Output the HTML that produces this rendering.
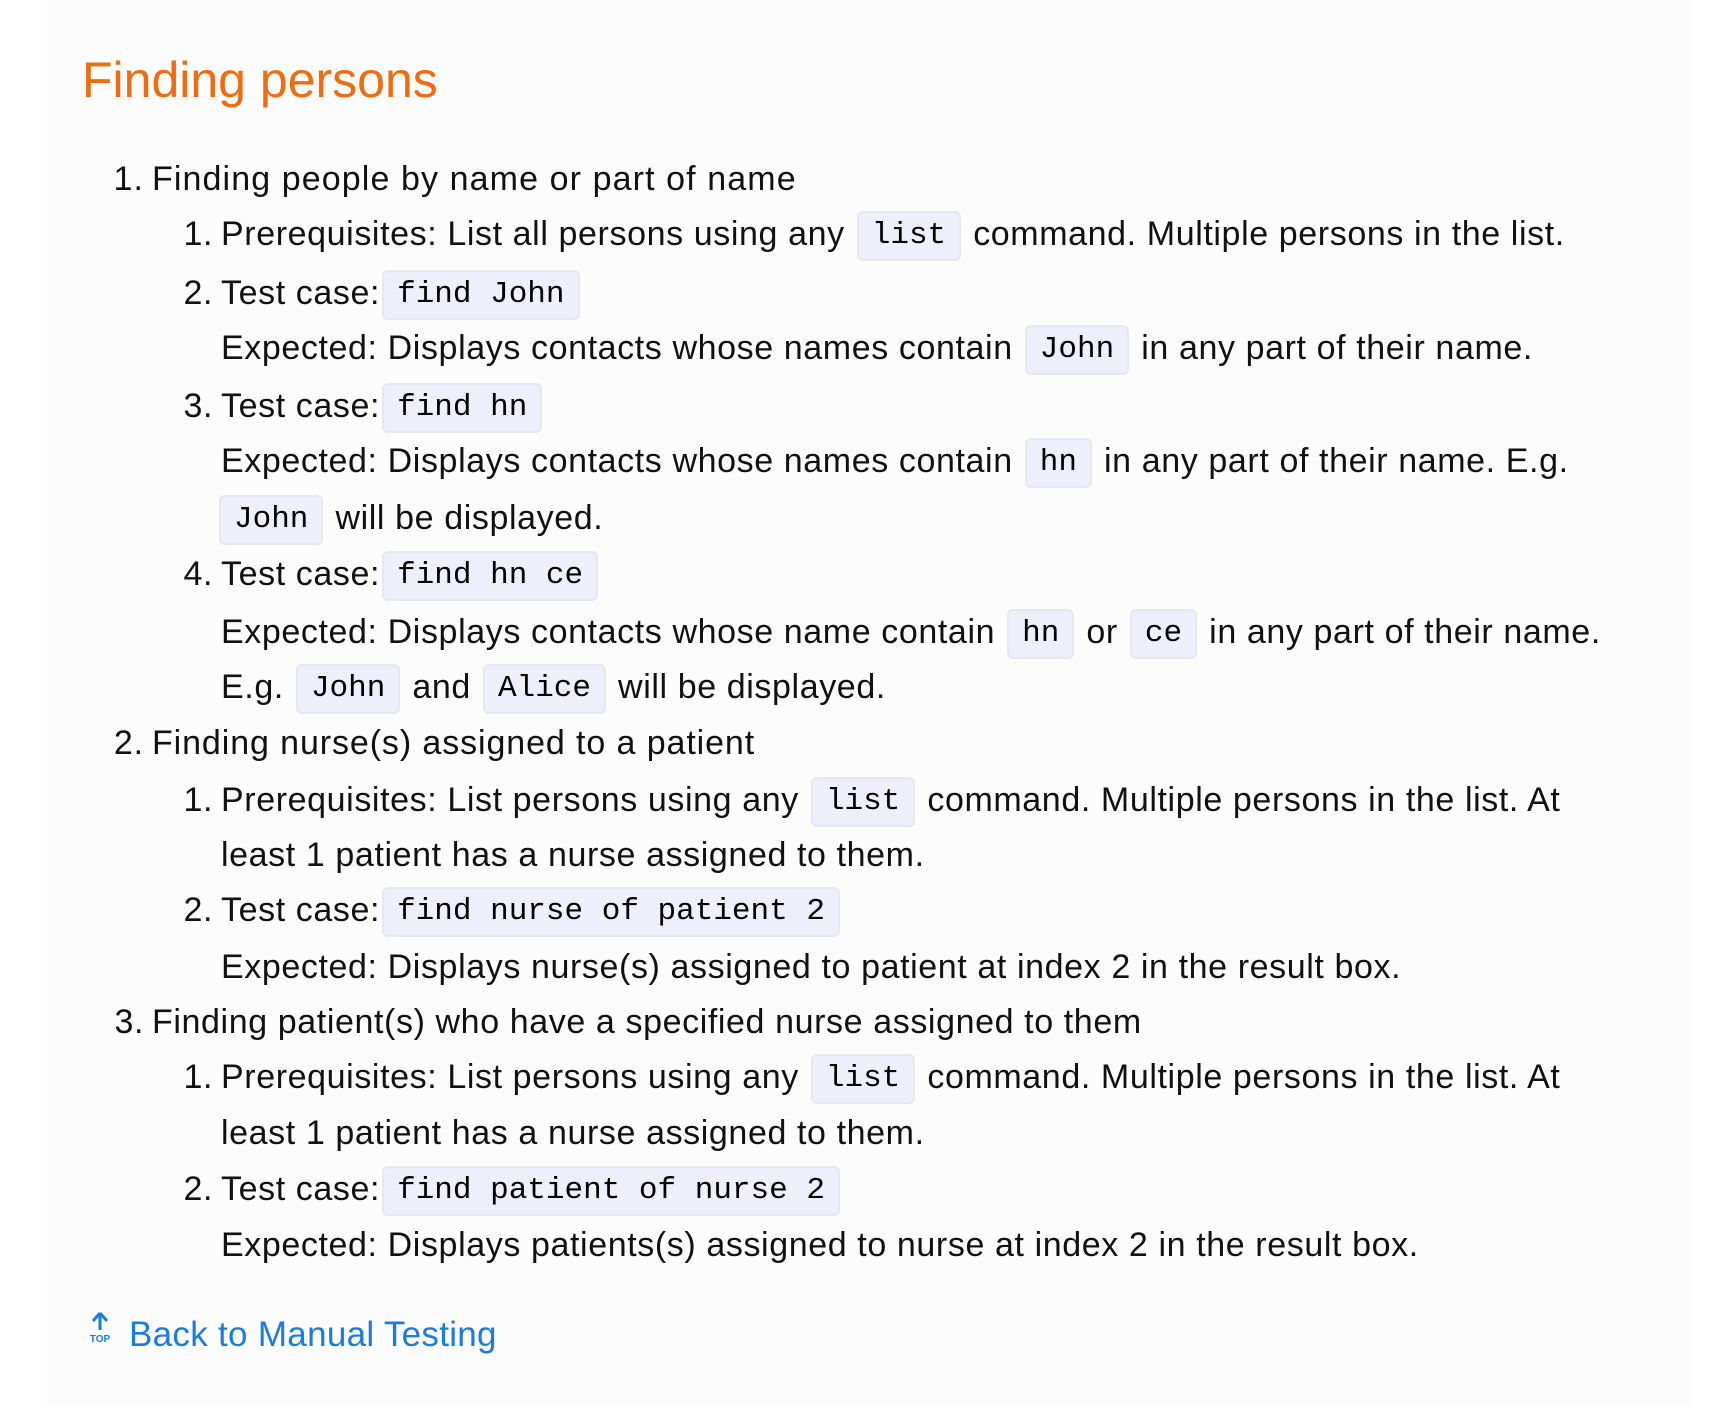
<!DOCTYPE html>
<html><head><meta charset="utf-8"><style>
body{margin:0;background:#fff;width:1726px;height:1406px;position:relative;overflow:hidden;font-family:"Liberation Sans",sans-serif;color:#111;}
.panel{position:absolute;left:47px;top:0;width:1645px;height:1406px;background:#fcfcfc;}
.l{position:absolute;height:56px;line-height:56px;font-size:34px;white-space:nowrap;letter-spacing:0.6px}
.n{position:absolute;right:100%;padding-right:8px}
code{font-family:"Liberation Mono",monospace;font-size:31px;display:inline-block;line-height:46px;padding:0 13px;background:#efeffb;border:2px solid #e7e7ef;border-radius:6px;vertical-align:middle;margin:0 2px;letter-spacing:0;color:#000}
h1{position:absolute;left:82px;top:48px;margin:0;font-weight:normal;font-size:50px;line-height:64px;color:#f26b0f;}
a{color:#1a7be0;text-decoration:none}
</style></head><body>
<div class="panel"></div>
<h1>Finding persons</h1>
<div class="l" style="left:152px;top:151px;letter-spacing:1.1px"><span class="n">1.</span>Finding people by name or part of name</div>
<div class="l" style="left:221px;top:206px"><span class="n">1.</span>Prerequisites: List all persons using any <code>list</code> command. Multiple persons in the list.</div>
<div class="l" style="left:221px;top:265px"><span class="n">2.</span>Test case:<code>find John</code></div>
<div class="l" style="left:221px;top:320px">Expected: Displays contacts whose names contain <code>John</code> in any part of their name.</div>
<div class="l" style="left:221px;top:378px"><span class="n">3.</span>Test case:<code>find hn</code></div>
<div class="l" style="left:221px;top:433px">Expected: Displays contacts whose names contain <code>hn</code> in any part of their name. E.g.</div>
<div class="l" style="left:217px;top:490px"><code>John</code> will be displayed.</div>
<div class="l" style="left:221px;top:546px"><span class="n">4.</span>Test case:<code>find hn ce</code></div>
<div class="l" style="left:221px;top:604px">Expected: Displays contacts whose name contain <code>hn</code> or <code>ce</code> in any part of their name.</div>
<div class="l" style="left:221px;top:659px">E.g. <code>John</code> and <code>Alice</code> will be displayed.</div>
<div class="l" style="left:152px;top:715px;letter-spacing:0.9px"><span class="n">2.</span>Finding nurse(s) assigned to a patient</div>
<div class="l" style="left:221px;top:772px"><span class="n">1.</span>Prerequisites: List persons using any <code>list</code> command. Multiple persons in the list. At</div>
<div class="l" style="left:221px;top:827px">least 1 patient has a nurse assigned to them.</div>
<div class="l" style="left:221px;top:882px"><span class="n">2.</span>Test case:<code>find nurse of patient 2</code></div>
<div class="l" style="left:221px;top:939px">Expected: Displays nurse(s) assigned to patient at index 2 in the result box.</div>
<div class="l" style="left:152px;top:994px"><span class="n">3.</span>Finding patient(s) who have a specified nurse assigned to them</div>
<div class="l" style="left:221px;top:1049px"><span class="n">1.</span>Prerequisites: List persons using any <code>list</code> command. Multiple persons in the list. At</div>
<div class="l" style="left:221px;top:1105px">least 1 patient has a nurse assigned to them.</div>
<div class="l" style="left:221px;top:1161px"><span class="n">2.</span>Test case:<code>find patient of nurse 2</code></div>
<div class="l" style="left:221px;top:1217px">Expected: Displays patients(s) assigned to nurse at index 2 in the result box.</div>
<svg style="position:absolute;left:86px;top:1310px" width="28" height="34" viewBox="0 0 28 34">
<path d="M14 3 L7 11 M14 3 L21 11 M14 3 L14 20" stroke="#1a7be0" stroke-width="3" fill="none"/>
<text x="14" y="32" font-family="Liberation Sans" font-size="10" font-weight="bold" fill="#1a7be0" text-anchor="middle">TOP</text>
</svg>
<div class="l" style="left:129px;top:1307px;font-size:35px;letter-spacing:0.3px"><a>Back to Manual Testing</a></div>
</body></html>
